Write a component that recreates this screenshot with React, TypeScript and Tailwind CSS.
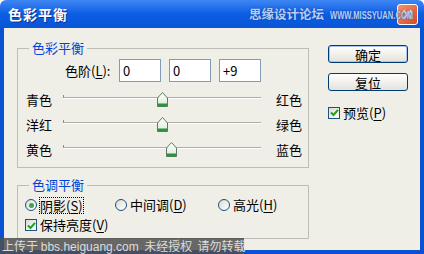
import type { ReactNode } from 'react';

function Thumb() {
  return (
    <svg width="13" height="17" viewBox="0 0 13 17">
      <defs>
        <linearGradient id="tg" x1="0" y1="0" x2="0" y2="1">
          <stop offset="0" stopColor="#ffffff" />
          <stop offset="0.7" stopColor="#e4f2e2" />
          <stop offset="1" stopColor="#c6e3c2" />
        </linearGradient>
      </defs>
      <path d="M1.5 7 L6.5 1.5 L11.5 7 V15.5 H1.5 Z" fill="url(#tg)" stroke="#5d7a60" strokeWidth="1" />
      <rect x="2" y="12.5" width="9" height="3" fill="#2f9144" />
    </svg>
  );
}

function Slider({ left, right, value }: { left: string; right: string; value: number }) {
  const x = ((value + 100) / 200) * 198;
  return (
    <div className="flex items-center h-[25px] pl-[8px]">
      <span className="w-[37px]">{left}</span>
      <div className="relative w-[198px] h-full">
        <div className="absolute left-0 right-0 top-[10px] h-[2px] border-t border-t-[#aeada6] border-b border-b-white" />
        <div className="absolute left-0 top-[8px] w-px h-[3px] bg-[#8e8d88]" />
        <div className="absolute top-[4px]" style={{ left: x - 6 }}>
          <Thumb />
        </div>
      </div>
      <span className="ml-[15px]">{right}</span>
    </div>
  );
}

function Check({ children }: { children: ReactNode }) {
  return (
    <span className="flex items-center gap-[3px]">
      <span className="w-[12px] h-[12px] border border-[#1c5180] bg-gradient-to-br from-[#dcdcd5] to-white flex items-center justify-center">
        <svg width="9" height="9" viewBox="0 0 9 9">
          <path d="M1 4.5 L3.5 7 L8 1.8" fill="none" stroke="#21a121" strokeWidth="2" />
        </svg>
      </span>
      <span>{children}</span>
    </span>
  );
}

function Radio({ checked, children }: { checked?: boolean; children: ReactNode }) {
  return (
    <span className="flex items-center gap-[3px]">
      <span className="w-[12px] h-[12px] rounded-full border border-[#1c5180] bg-gradient-to-br from-[#dcdcd5] to-white flex items-center justify-center">
        {checked && <span className="w-[5px] h-[5px] rounded-full bg-[#3fa54a]" />}
      </span>
      {children}
    </span>
  );
}

function U({ children }: { children: ReactNode }) {
  return <span className="underline underline-offset-2">{children}</span>;
}

function Button({ children, primary }: { children: ReactNode; primary?: boolean }) {
  return (
    <div
      className={`w-[80px] h-[18px] rounded-[3px] border border-[#003c74] bg-gradient-to-b from-white to-[#e3e2da] flex items-center justify-center leading-none ${
        primary ? 'shadow-[inset_0_0_0_1px_#a9c4f3]' : ''
      }`}
    >
      {children}
    </div>
  );
}

export default function App() {
  return (
    <div className="relative w-[424px] h-[254px] flex flex-col overflow-hidden bg-white text-[13px] text-black font-['Noto_Sans_CJK_SC',sans-serif]">
      <div className="relative h-[28px] shrink-0 rounded-t-[6px] bg-gradient-to-b from-[#3d86f3] via-[#0b5de4] to-[#0a55d6] flex items-center pl-[8px]">
        <span className="text-white font-bold text-[14px] tracking-[1px] [text-shadow:1px_1px_0_#0a2f8f]">色彩平衡</span>
        <div className="absolute right-[6px] top-[4px] w-[21px] h-[21px] rounded-[3px] border border-white bg-gradient-to-br from-[#f0946c] to-[#d6461d] flex items-center justify-center">
          <svg width="11" height="11" viewBox="0 0 11 11">
            <path d="M1.5 1.5 L9.5 9.5 M9.5 1.5 L1.5 9.5" stroke="white" strokeWidth="2" />
          </svg>
        </div>
        <div className="absolute left-[249px] top-[5px] w-[165px] flex items-baseline gap-[6px] whitespace-nowrap text-[#b5cff7] font-bold [text-shadow:0_0_2px_#123a9a]">
          <span className="text-[12.5px]">思缘设计论坛</span>
          <span className="inline-block text-[10px] font-['Liberation_Sans',sans-serif] scale-x-[0.76] origin-left">WWW.MISSYUAN.COM</span>
        </div>
      </div>

      <div className="flex-1 flex bg-[#efeee7] border-x-4 border-b-4 border-[#0a52d4] pl-[13px] pt-[12px]">
        <div className="w-[292px] flex flex-col">
          <fieldset className="border border-[#bdbcb5] pb-[5px]">
            <legend className="ml-[11px] px-[3px] leading-[16px] text-[#0046d5]">色彩平衡</legend>
            <div className="flex items-center mt-[3px] h-[23px] pl-[47px]">
              <span className="w-[54px]">
                色阶(<U>L</U>):
              </span>
              <div className="flex gap-[8px]">
                <div className="w-[42px] h-[23px] border border-[#7f9db9] bg-white pl-[3px] leading-[21px]">0</div>
                <div className="w-[42px] h-[23px] border border-[#7f9db9] bg-white pl-[3px] leading-[21px]">0</div>
                <div className="w-[42px] h-[23px] border border-[#7f9db9] bg-white pl-[3px] leading-[21px]">+9</div>
              </div>
            </div>
            <div className="mt-[5px]">
              <Slider left="青色" right="红色" value={0} />
              <Slider left="洋红" right="绿色" value={0} />
              <Slider left="黄色" right="蓝色" value={9} />
            </div>
          </fieldset>

          <fieldset className="mt-[9px] border border-[#bdbcb5] h-[62px]">
            <legend className="ml-[11px] px-[3px] leading-[16px] text-[#0046d5]">色调平衡</legend>
            <div className="flex items-center h-[20px] mt-[2px] pl-[7px]">
              <div className="w-[90px]">
                <Radio checked>
                  <span className="outline-1 outline-dotted outline-black leading-[15px]">
                    阴影(<U>S</U>)
                  </span>
                </Radio>
              </div>
              <div className="w-[103px]">
                <Radio>
                  <span>
                    中间调(<U>D</U>)
                  </span>
                </Radio>
              </div>
              <Radio>
                <span>
                  高光(<U>H</U>)
                </span>
              </Radio>
            </div>
            <div className="flex items-center h-[20px] pl-[7px]">
              <Check>
                保持亮度(<U>V</U>)
              </Check>
            </div>
          </fieldset>
        </div>

        <div className="ml-[19px] pt-[5px] flex flex-col">
          <Button primary>确定</Button>
          <div className="mt-[10px]">
            <Button>复位</Button>
          </div>
          <div className="mt-[12px]">
            <Check>
              预览(<U>P</U>)
            </Check>
          </div>
        </div>
      </div>

      <div className="absolute left-0 bottom-0 w-[244px] h-[16px] bg-[#4f4f4f]/85 text-[#dcdcdc] text-[12px] leading-[16px] pl-[2px] whitespace-nowrap">
        上传于 <span className="font-['Liberation_Sans',sans-serif]">bbs.heiguang.com</span>&nbsp; 未经授权&nbsp; 请勿转载
      </div>
    </div>
  );
}
